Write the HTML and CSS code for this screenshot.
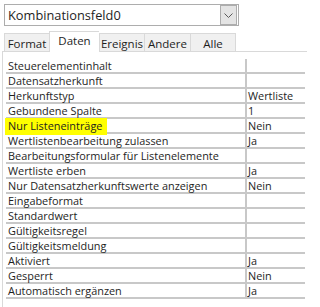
FILE: index.html
```html
<!DOCTYPE html>
<html lang="de">
<head>
<meta charset="utf-8">
<link rel="stylesheet" href="styles.css">
</head>
<body>
<div class="combo">
  <span class="combo-text">Kombinationsfeld0</span>
  <span class="combo-btn"><svg width="9" height="5" viewBox="0 0 9 5"><path d="M0.5 0.5 L4.5 4.5 L8.5 0.5" fill="none" stroke="#5a5a5a" stroke-width="1"/></svg></span>
</div>
<div class="tabs">
  <div class="tab t-format">Format</div>
  <div class="tab active t-daten">Daten</div>
  <div class="tab t-ereignis">Ereignis</div>
  <div class="tab t-andere">Andere</div>
  <div class="tab t-alle">Alle</div>
</div>
<div class="panel">
  <div class="grid">
    <div class="row"><div class="lab">Steuerelementinhalt</div><div class="val"></div></div>
    <div class="row"><div class="lab">Datensatzherkunft</div><div class="val"></div></div>
    <div class="row"><div class="lab">Herkunftstyp</div><div class="val">Wertliste</div></div>
    <div class="row"><div class="lab">Gebundene Spalte</div><div class="val">1</div></div>
    <div class="row"><div class="lab"><span class="hl">Nur Listeneinträge</span></div><div class="val">Nein</div></div>
    <div class="row"><div class="lab">Wertlistenbearbeitung zulassen</div><div class="val">Ja</div></div>
    <div class="row"><div class="lab">Bearbeitungsformular für Listenelemente</div><div class="val"></div></div>
    <div class="row"><div class="lab">Wertliste erben</div><div class="val">Ja</div></div>
    <div class="row"><div class="lab">Nur Datensatzherkunftswerte anzeigen</div><div class="val">Nein</div></div>
    <div class="row"><div class="lab">Eingabeformat</div><div class="val"></div></div>
    <div class="row"><div class="lab">Standardwert</div><div class="val"></div></div>
    <div class="row"><div class="lab">Gültigkeitsregel</div><div class="val"></div></div>
    <div class="row"><div class="lab">Gültigkeitsmeldung</div><div class="val"></div></div>
    <div class="row"><div class="lab">Aktiviert</div><div class="val">Ja</div></div>
    <div class="row"><div class="lab">Gesperrt</div><div class="val">Nein</div></div>
    <div class="row"><div class="lab">Automatisch ergänzen</div><div class="val">Ja</div></div>
  </div>
</div>
</body>
</html>
```
FILE: styles.css
```css
html, body {
  margin: 0;
  padding: 0;
  background: #ffffff;
  overflow: hidden;
}
body {
  font-family: "Open Sans", "Noto Sans", sans-serif;
  font-size: 10.9px;
  color: #1e1e1e;
  width: 307px;
  height: 307px;
}
.combo {
  box-sizing: border-box;
  margin: 4px 0 0 4px;
  width: 235px;
  height: 22px;
  border: 1px solid #adadad;
  display: flex;
  align-items: center;
  padding-left: 3px;
}
.combo-text {
  font-size: 12.8px;
  flex: 1;
}
.combo-btn {
  box-sizing: border-box;
  width: 17px;
  height: 20px;
  margin-right: 1px;
  border: 1px solid #adadad;
  background: #e4e4e4;
  display: flex;
  align-items: center;
  justify-content: center;
}
.tabs {
  display: flex;
  align-items: flex-end;
  margin: 5px 0 0 4px;
  height: 20px;
}
.tab {
  box-sizing: border-box;
  height: 18px;
  border: 1px solid #d9d9d9;
  border-bottom: none;
  border-right: none;
  background: #f0f0f0;
  text-align: center;
  line-height: 19px;
  font-size: 11.5px;
  white-space: nowrap;
}
.t-format { width: 45px; }
.t-daten { width: 50px; }
.t-ereignis { width: 45px; }
.t-andere { width: 46px; }
.t-alle { width: 46px; border-right: 1px solid #d9d9d9; }
.tab.active {
  height: 21px;
  background: #ffffff;
  line-height: 17px;
  position: relative;
  margin-bottom: -1px;
  z-index: 1;
}
.tab.active + .tab { border-left: 1px solid #d9d9d9; }
.panel {
  margin-left: 2px;
  border-top: 1px solid #d9d9d9;
  border-left: 1px solid #d9d9d9;
  padding-top: 7px;
  height: 260px;
}
.grid {
  margin-left: 3px;
}
.row {
  display: grid;
  grid-template-columns: 241px 58px;
  height: 15px;
}
.lab, .val {
  box-sizing: border-box;
  height: 15px;
  border-bottom: 2px solid #c8c8c8;
  line-height: 14px;
  white-space: nowrap;
  overflow: hidden;
}
.lab {
  padding-left: 2px;
  border-right: 2px solid #c8c8c8;
  overflow: visible;
}
.val {
  padding-left: 1px;
}
.hl {
  background: #ffff00;
  display: inline-block;
  margin-left: -3px;
  padding: 1px 5px 2px 3px;
  margin-top: -2px;
  line-height: 14px;
  position: relative;
}
```
